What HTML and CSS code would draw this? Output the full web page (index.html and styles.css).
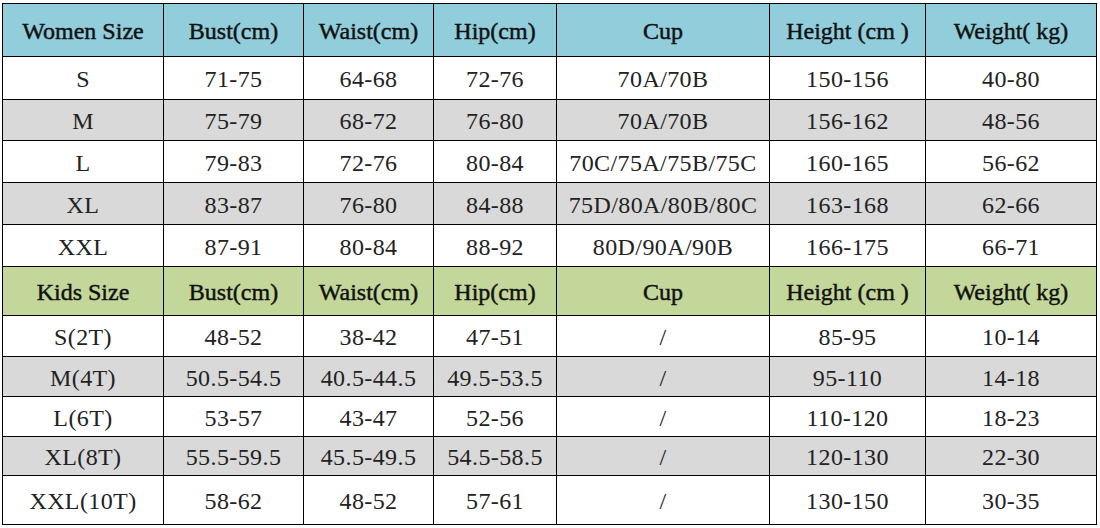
FILE: index.html
```html
<!DOCTYPE html>
<html>
<head>
<meta charset="utf-8">
<link rel="stylesheet" href="styles.css">
</head>
<body>
<table class="chart">
  <colgroup>
    <col class="c-size"><col class="c-bust"><col class="c-waist"><col class="c-hip"><col class="c-cup"><col class="c-height"><col class="c-weight">
  </colgroup>
  <tbody>
    <tr class="head head-women h-53">
      <th>Women Size</th><th>Bust(cm)</th><th>Waist(cm)</th><th>Hip(cm)</th><th>Cup</th><th>Height (cm )</th><th>Weight( kg)</th>
    </tr>
    <tr class="h-43"><td>S</td><td>71-75</td><td>64-68</td><td>72-76</td><td>70A/70B</td><td>150-156</td><td>40-80</td></tr>
    <tr class="alt h-41"><td>M</td><td>75-79</td><td>68-72</td><td>76-80</td><td>70A/70B</td><td>156-162</td><td>48-56</td></tr>
    <tr class="h-42"><td>L</td><td>79-83</td><td>72-76</td><td>80-84</td><td>70C/75A/75B/75C</td><td>160-165</td><td>56-62</td></tr>
    <tr class="alt h-42"><td>XL</td><td>83-87</td><td>76-80</td><td>84-88</td><td>75D/80A/80B/80C</td><td>163-168</td><td>62-66</td></tr>
    <tr class="h-42"><td>XXL</td><td>87-91</td><td>80-84</td><td>88-92</td><td>80D/90A/90B</td><td>166-175</td><td>66-71</td></tr>
    <tr class="head head-kids h-49">
      <th>Kids Size</th><th>Bust(cm)</th><th>Waist(cm)</th><th>Hip(cm)</th><th>Cup</th><th>Height (cm )</th><th>Weight( kg)</th>
    </tr>
    <tr class="h-41"><td>S(2T)</td><td>48-52</td><td>38-42</td><td>47-51</td><td>/</td><td>85-95</td><td>10-14</td></tr>
    <tr class="alt h-40"><td>M(4T)</td><td>50.5-54.5</td><td>40.5-44.5</td><td>49.5-53.5</td><td>/</td><td>95-110</td><td>14-18</td></tr>
    <tr class="h-40"><td>L(6T)</td><td>53-57</td><td>43-47</td><td>52-56</td><td>/</td><td>110-120</td><td>18-23</td></tr>
    <tr class="alt h-39"><td>XL(8T)</td><td>55.5-59.5</td><td>45.5-49.5</td><td>54.5-58.5</td><td>/</td><td>120-130</td><td>22-30</td></tr>
    <tr class="h-49"><td>XXL(10T)</td><td>58-62</td><td>48-52</td><td>57-61</td><td>/</td><td>130-150</td><td>30-35</td></tr>
  </tbody>
</table>
</body>
</html>
```

FILE: styles.css
```css
html, body {
  margin: 0;
  padding: 0;
  background: #ffffff;
}

body {
  padding: 3px 0 0 2px;
  font-family: "Liberation Serif", "Times New Roman", serif;
  color: #111;
}

.chart {
  border-collapse: collapse;
  table-layout: fixed;
  width: 1094px;
}

.c-size { width: 161px; }
.c-bust { width: 140px; }
.c-waist { width: 130px; }
.c-hip { width: 123px; }
.c-cup { width: 213px; }
.c-height { width: 156px; }
.c-weight { width: 171px; }

.chart th,
.chart td {
  border: 1px solid #000;
  text-align: center;
  vertical-align: middle;
  padding: 3px 0 0 0;
  white-space: nowrap;
}

.chart th {
  font-family: "Liberation Serif", "Times New Roman", serif;
  font-size: 24px;
  font-weight: normal;
  -webkit-text-stroke: 0.45px #111;
  color: #111;
}

.chart td {
  font-size: 24px;
  font-weight: normal;
  letter-spacing: 0.4px;
  color: #222;
}

.head-women { background: #92cddc; }
.head-kids { background: #c4d79b; }
.alt { background: #d9d9d9; }

.h-53 { height: 53px; }
.h-49 { height: 49px; }
.h-43 { height: 43px; }
.h-42 { height: 42px; }
.h-41 { height: 41px; }
.h-40 { height: 40px; }
.h-39 { height: 39px; }
```
